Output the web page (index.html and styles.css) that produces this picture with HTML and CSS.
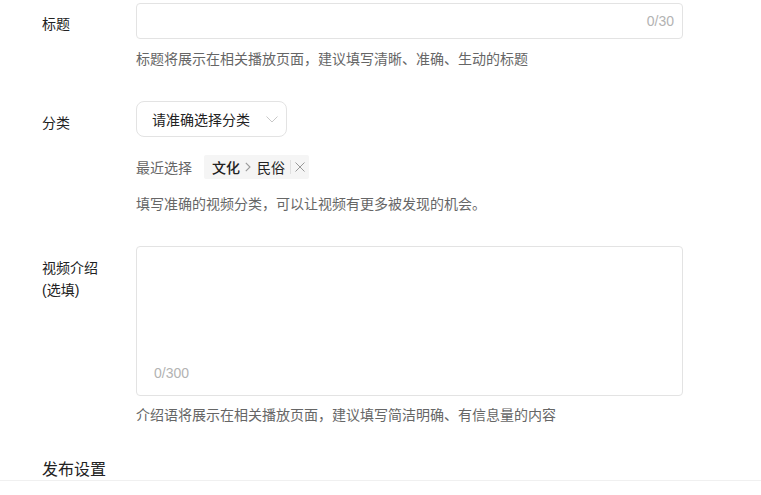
FILE: index.html
```html
<!DOCTYPE html>
<html lang="zh-CN">
<head>
<meta charset="utf-8">
<link rel="stylesheet" href="styles.css">
</head>
<body>
<div class="form">
  <div class="row row-title">
    <div class="label">标题</div>
    <div class="field">
      <div class="input">
        <span class="count">0/30</span>
      </div>
      <div class="hint hint-title">标题将展示在相关播放页面，建议填写清晰、准确、生动的标题</div>
    </div>
  </div>

  <div class="row">
    <div class="label">分类</div>
    <div class="field">
      <div class="select">
        <span>请准确选择分类</span>
        <svg class="chev" width="12" height="7" viewBox="0 0 12 7"><path d="M0.5 0.5 L6 6 L11.5 0.5" fill="none" stroke="#c8c8c8" stroke-width="1"/></svg>
      </div>
      <div class="recent">
        <span class="recent-label">最近选择</span>
        <span class="tag">
          <span class="tag-main">文化</span>
          <svg class="tag-arrow" width="6" height="10" viewBox="0 0 6 10"><path d="M0.8 0.8 L5 5 L0.8 9.2" fill="none" stroke="#999" stroke-width="1.1"/></svg>
          <span class="tag-sub">民俗</span>
          <span class="tag-sep"></span>
          <svg class="tag-x" width="10" height="10" viewBox="0 0 10 10"><path d="M0.5 0.5 L9.5 9.5 M9.5 0.5 L0.5 9.5" stroke="#999" stroke-width="1"/></svg>
        </span>
      </div>
      <div class="hint hint-cat">填写准确的视频分类，可以让视频有更多被发现的机会。</div>
    </div>
  </div>

  <div class="row row-last">
    <div class="label">视频介绍<br>(选填)</div>
    <div class="field">
      <div class="textarea">
        <span class="count-area">0/300</span>
      </div>
      <div class="hint hint-desc">介绍语将展示在相关播放页面，建议填写简洁明确、有信息量的内容</div>
    </div>
  </div>
</div>
<div class="section">
  <h2 class="section-title">发布设置</h2>
</div>
</body>
</html>
```
FILE: styles.css
```css
html, body {
  margin: 0;
  padding: 0;
  background: #fff;
}
body {
  font-family: "Liberation Sans", "Noto Sans CJK SC", sans-serif;
  font-size: 14px;
  color: #333;
  width: 761px;
  height: 495px;
  overflow: hidden;
}
.form {
  padding-top: 3px;
}
.row {
  display: flex;
  margin-bottom: 32px;
}
.row-last {
  margin-bottom: 0;
}
.label {
  width: 94px;
  padding-left: 42px;
  padding-top: 11px;
  line-height: 22px;
  color: #222;
  flex-shrink: 0;
}
.row-title .label {
  padding-top: 10px;
}
.field {
  width: 547px;
}
.input {
  height: 34px;
  border: 1px solid #e3e3e3;
  border-radius: 4px;
  display: flex;
  align-items: center;
  justify-content: flex-end;
  padding-right: 8px;
}
.count {
  color: #b3b3b3;
  font-size: 14px;
  line-height: 20px;
}
.hint {
  color: #666;
  font-size: 14px;
  line-height: 20px;
  white-space: nowrap;
}
.hint-title {
  margin-top: 10px;
}
.select {
  display: inline-flex;
  align-items: center;
  box-sizing: border-box;
  width: 151px;
  height: 36px;
  border: 1px solid #e3e3e3;
  border-radius: 8px;
  padding-left: 15px;
  color: #222;
}
.chev {
  margin-left: 16px;
  margin-top: 1px;
}
.recent {
  display: flex;
  align-items: center;
  margin-top: 18px;
  height: 24px;
}
.recent-label {
  color: #666;
  width: 68px;
}
.tag {
  display: inline-flex;
  align-items: center;
  height: 24px;
  background: #f5f5f5;
  padding: 0 4px 0 8px;
  border-radius: 2px;
  color: #222;
}
.tag-main {
  font-weight: 500;
}
.tag-arrow {
  margin: 0 6px 0 5px;
}
.tag-sep {
  width: 1px;
  height: 14px;
  background: #e0e0e0;
  margin: 0 4px 0 5px;
}
.hint-cat {
  margin-top: 15px;
}
.textarea {
  box-sizing: border-box;
  height: 150px;
  border: 1px solid #e3e3e3;
  border-radius: 4px;
  display: flex;
  align-items: flex-end;
  padding: 0 0 12px 17px;
}
.count-area {
  color: #b3b3b3;
  line-height: 20px;
}
.hint-desc {
  margin-top: 9px;
}
.section {
  margin-top: 35px;
  border-bottom: 1px solid #f0f0f0;
}
.section-title {
  margin: 0;
  padding-left: 42px;
  font-size: 16px;
  font-weight: normal;
  line-height: 20px;
  color: #222;
}
```
